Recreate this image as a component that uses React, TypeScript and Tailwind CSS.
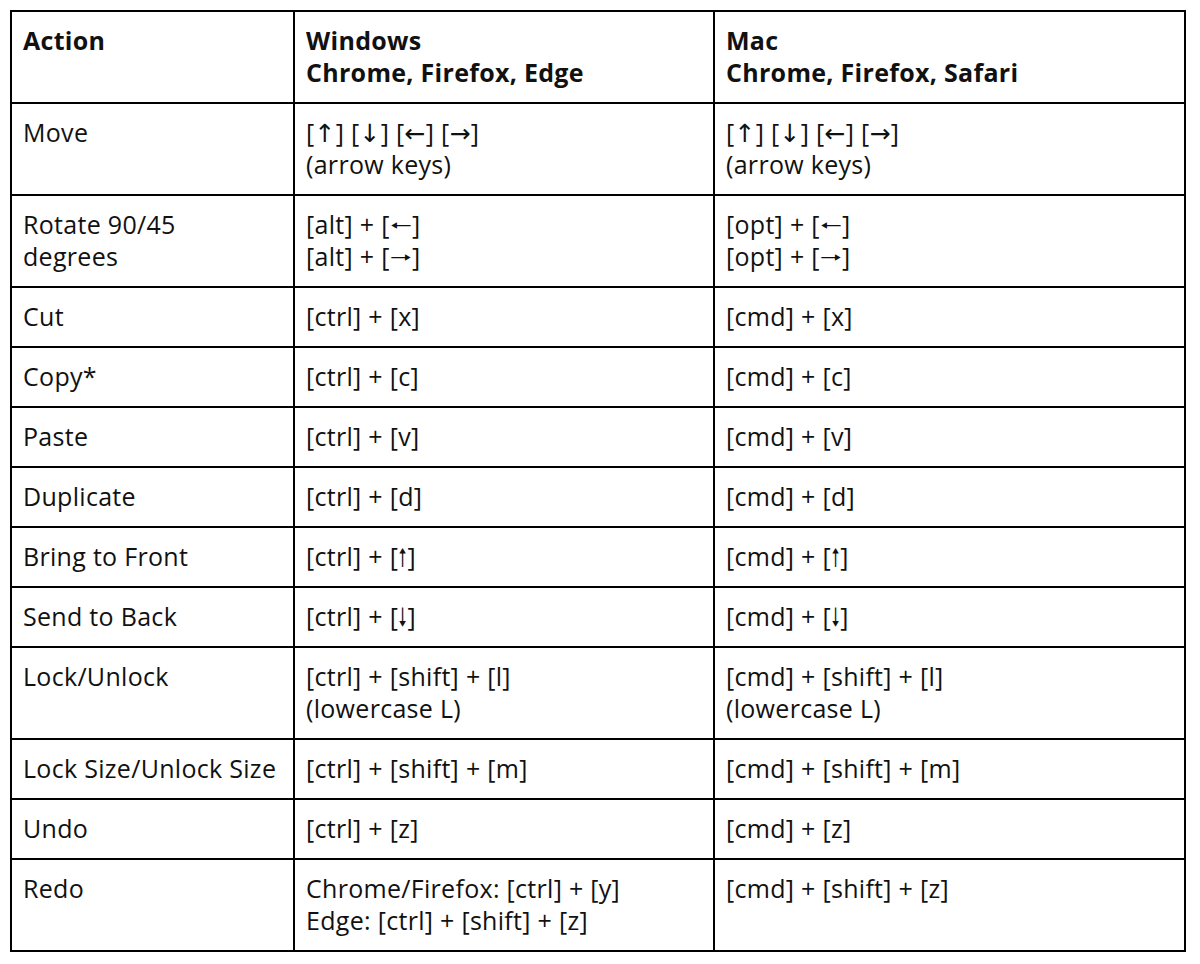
const rows: [string[], string[], string[]][] = [
  [['Move'], ['[↑] [↓] [←] [→]', '(arrow keys)'], ['[↑] [↓] [←] [→]', '(arrow keys)']],
  [['Rotate 90/45', 'degrees'], ['[alt] + [🠐]', '[alt] + [🠒]'], ['[opt] + [🠐]', '[opt] + [🠒]']],
  [['Cut'], ['[ctrl] + [x]'], ['[cmd] + [x]']],
  [['Copy*'], ['[ctrl] + [c]'], ['[cmd] + [c]']],
  [['Paste'], ['[ctrl] + [v]'], ['[cmd] + [v]']],
  [['Duplicate'], ['[ctrl] + [d]'], ['[cmd] + [d]']],
  [['Bring to Front'], ['[ctrl] + [🠑]'], ['[cmd] + [🠑]']],
  [['Send to Back'], ['[ctrl] + [🠓]'], ['[cmd] + [🠓]']],
  [['Lock/Unlock'], ['[ctrl] + [shift] + [l]', '(lowercase L)'], ['[cmd] + [shift] + [l]', '(lowercase L)']],
  [['Lock Size/Unlock Size'], ['[ctrl] + [shift] + [m]'], ['[cmd] + [shift] + [m]']],
  [['Undo'], ['[ctrl] + [z]'], ['[cmd] + [z]']],
  [['Redo'], ['Chrome/Firefox: [ctrl] + [y]', 'Edge: [ctrl] + [shift] + [z]'], ['[cmd] + [shift] + [z]']],
]

function Lines({ lines }: { lines: string[] }) {
  return (
    <>
      {lines.map((l, i) => (
        <div key={i} className="h-[32px] whitespace-nowrap">
          {l}
        </div>
      ))}
    </>
  )
}

const cell = 'border-2 border-black px-[11px] pt-[12px] pb-[14px] align-top text-left'

export default function App() {
  return (
    <div
      className="bg-white w-[1200px] h-[964px] pt-[10px] pl-[10px] text-[25px] leading-[32px] tracking-[0.3px] text-[#111]"
      style={{ fontFamily: '"Open Sans", "DejaVu Sans", sans-serif' }}
    >
      <table className="border-collapse w-[1174px] table-fixed">
        <colgroup>
          <col className="w-[283px]" />
          <col className="w-[420px]" />
          <col className="w-[471px]" />
        </colgroup>
        <thead>
          <tr>
            <th className={`${cell} font-bold`}>
              <Lines lines={['Action']} />
            </th>
            <th className={`${cell} font-bold`}>
              <Lines lines={['Windows', 'Chrome, Firefox, Edge']} />
            </th>
            <th className={`${cell} font-bold`}>
              <Lines lines={['Mac', 'Chrome, Firefox, Safari']} />
            </th>
          </tr>
        </thead>
        <tbody>
          {rows.map(([action, win, mac]) => (
            <tr key={action.join(' ')}>
              <td className={`${cell} font-normal`}>
                <Lines lines={action} />
              </td>
              <td className={`${cell} font-normal`}>
                <Lines lines={win} />
              </td>
              <td className={`${cell} font-normal`}>
                <Lines lines={mac} />
              </td>
            </tr>
          ))}
        </tbody>
      </table>
    </div>
  )
}
